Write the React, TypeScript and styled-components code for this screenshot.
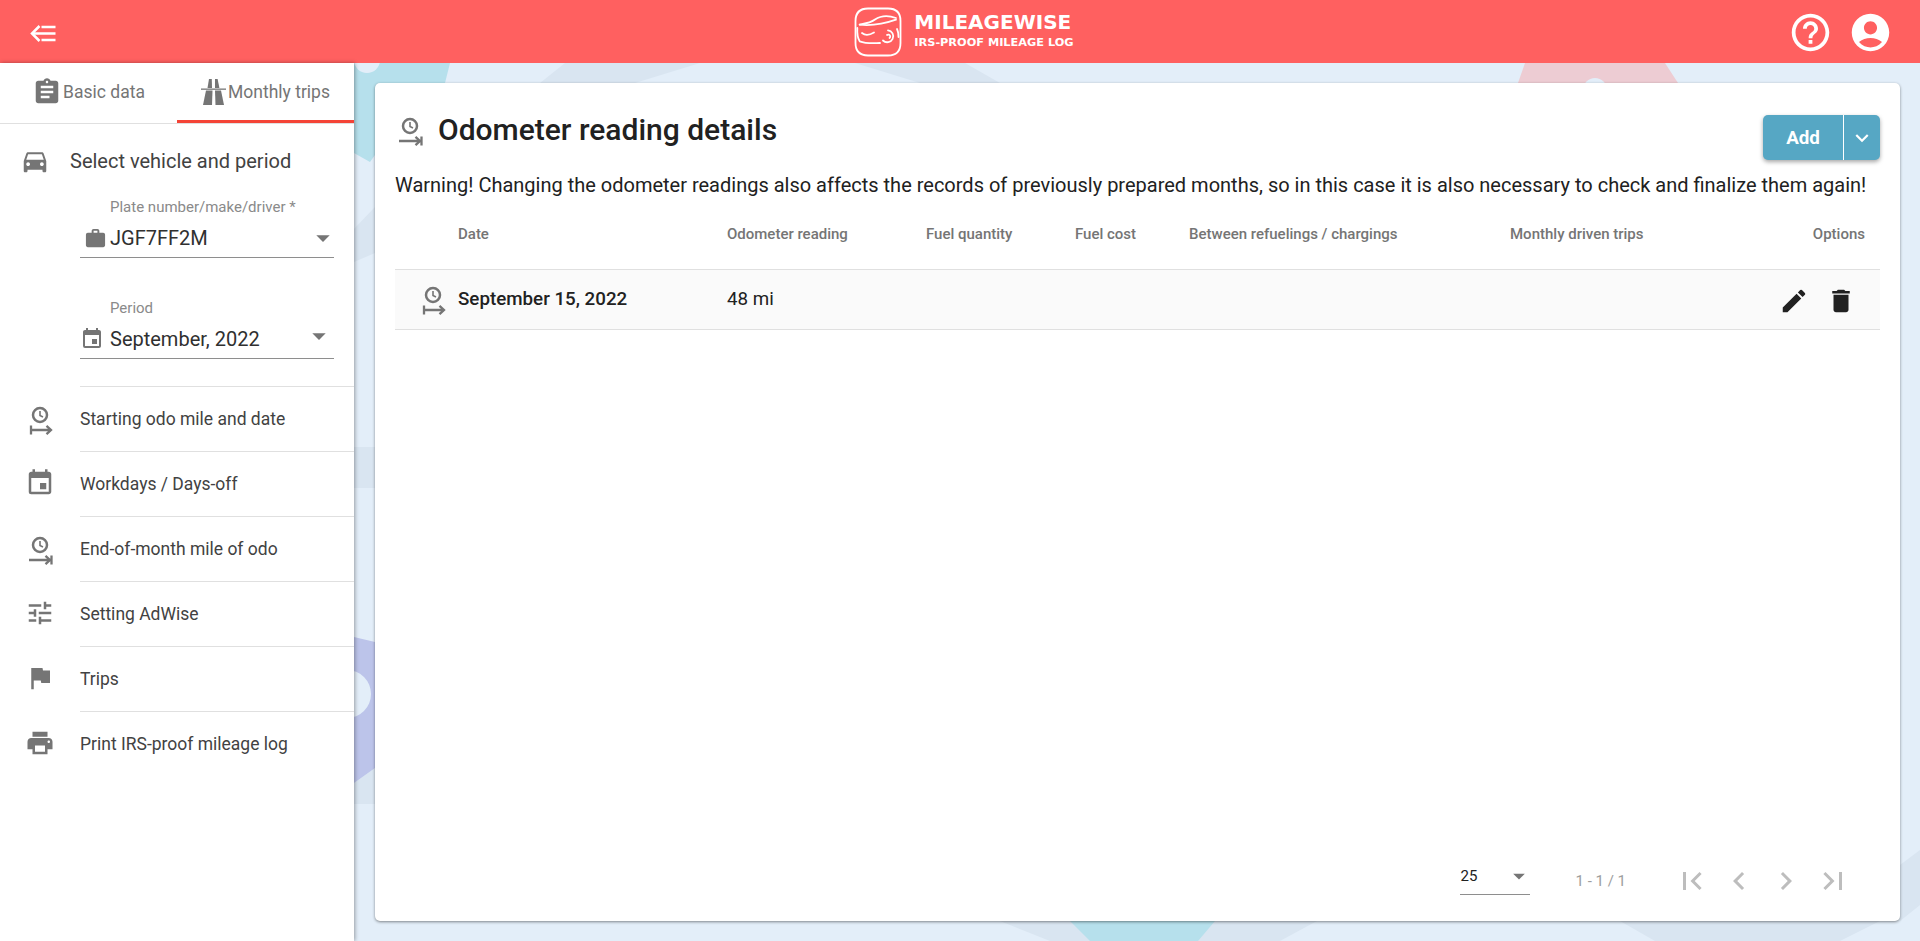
import styled, { createGlobalStyle } from "styled-components";
import {
  MdAccountCircle,
  MdArrowDropDown,
  MdAssignment,
  MdChevronLeft,
  MdChevronRight,
  MdDelete,
  MdDirectionsCar,
  MdEdit,
  MdEvent,
  MdExpandMore,
  MdFirstPage,
  MdFlag,
  MdHelpOutline,
  MdLastPage,
  MdPrint,
  MdTune,
  MdWork,
} from "react-icons/md";

const GlobalStyle = createGlobalStyle`
  html, body {
    margin: 0;
    height: 100%;
    overflow: hidden;
    font-family: Roboto, "Liberation Sans", sans-serif;
    color: #212121;
  }
  #root { height: 100%; }
  * { box-sizing: border-box; }
`;

const Page = styled.div`
  position: relative;
  display: flex;
  flex-direction: column;
  height: 941px;
  background: #e3eef9;
  overflow: hidden;
`;

const Backdrop = styled.svg`
  position: absolute;
  inset: 0;
  width: 100%;
  height: 100%;
`;

const Header = styled.header`
  position: relative;
  flex: 0 0 63px;
  display: grid;
  grid-template-columns: 1fr auto 1fr;
  align-items: center;
  padding: 0 27px 0 30px;
  background: #ff6060;
  color: #fff;
`;

const BackIcon = styled.svg`
  margin-top: 3px;
`;

const Brand = styled.div`
  display: flex;
  align-items: flex-start;
  gap: 12px;
  margin-left: 5px;
`;

const BrandText = styled.div`
  display: flex;
  flex-direction: column;
  margin-top: 3px;
  font-family: "DejaVu Sans", sans-serif;
  font-weight: 700;
  white-space: nowrap;
`;

const BrandName = styled.span`
  font-size: 20px;
  line-height: 24px;
`;

const BrandTag = styled.span`
  font-size: 11.3px;
  line-height: 18px;
`;

const HeaderActions = styled.div`
  display: flex;
  justify-content: flex-end;
  align-items: center;
  gap: 15px;
  margin-top: 2px;
`;

const Body = styled.div`
  position: relative;
  flex: 1;
  display: flex;
  min-height: 0;
`;

const Sidebar = styled.aside`
  flex: 0 0 354px;
  background: #fff;
  box-shadow: 1px 0 4px rgba(0, 0, 0, 0.35);
`;

const Tabs = styled.div`
  display: flex;
  height: 61px;
  border-bottom: 1px solid #e0e0e0;
`;

const Tab = styled.div<{ $active?: boolean }>`
  flex: 1;
  display: flex;
  align-items: center;
  justify-content: center;
  gap: ${(p) => (p.$active ? "2px" : "1px")};
  height: 60px;
  font-size: 17.5px;
  color: #757575;
  border-bottom: 3px solid ${(p) => (p.$active ? "#f44336" : "transparent")};
`;

const VehicleHead = styled.div`
  display: flex;
  align-items: center;
  height: 74px;
  padding-left: 20px;
  gap: 20px;
  font-size: 20px;
  color: #424242;
  svg { color: #757575; }
`;

const Field = styled.div<{ $gap?: number }>`
  margin: ${(p) => p.$gap ?? 0}px 20px 0 80px;
  height: 60px;
  border-bottom: 1px solid #8e8e8e;
`;

const FieldLabel = styled.label`
  display: block;
  padding-left: 30px;
  margin-bottom: 5px;
  font-size: 15px;
  line-height: 18px;
  color: #8a8a8a;
`;

const FieldRow = styled.div`
  display: flex;
  align-items: center;
  height: 36px;
  padding-bottom: 2px;
  font-size: 20px;
  color: #303030;
  svg { color: #757575; flex: none; }
`;

const FieldIcon = styled.span<{ $width: number; $left: number }>`
  display: flex;
  width: ${(p) => p.$width}px;
  margin-left: ${(p) => p.$left}px;
`;

const FieldValue = styled.span`
  flex: 1;
`;

const FieldArrow = styled.span<{ $right: number; $up?: number }>`
  display: flex;
  margin-right: ${(p) => p.$right}px;
  margin-top: ${(p) => -(p.$up ?? 0)}px;
`;

const NavList = styled.nav`
  margin-top: 27px;
`;

const NavItem = styled.div`
  position: relative;
  display: flex;
  align-items: center;
  height: 65px;
  margin-left: 80px;
  border-top: 1px solid #e0e0e0;
  font-size: 17.5px;
  color: #424242;
`;

const NavIcon = styled.span`
  position: absolute;
  left: -55px;
  top: 16px;
  display: flex;
  color: #757575;
`;

const Main = styled.main`
  position: relative;
  flex: 1;
  padding: 20px 20px 20px 21px;
  display: flex;
  min-width: 0;
`;

const Card = styled.section`
  flex: 1;
  display: flex;
  flex-direction: column;
  padding: 0 20px;
  background: #fff;
  border-radius: 5px;
  box-shadow: 0 1px 3px rgba(0, 0, 0, 0.45);
`;

const TitleRow = styled.div`
  display: flex;
  align-items: flex-start;
  justify-content: space-between;
  height: 86px;
  padding-top: 28px;
`;

const Title = styled.h1`
  display: flex;
  align-items: center;
  gap: 13px;
  margin: 0;
  font-size: 30px;
  font-weight: 500;
  line-height: 38px;
  color: #212121;
  svg { color: #757575; }
`;

const AddGroup = styled.div`
  display: flex;
  height: 45px;
  margin-top: 4px;
  color: #fff;
  background: #56a7c4;
  border-radius: 5px;
  box-shadow: 0 2px 4px rgba(0, 0, 0, 0.35);
`;

const AddButton = styled.div`
  width: 81px;
  display: flex;
  align-items: center;
  justify-content: center;
  font-size: 18.75px;
  font-weight: 700;
  border-right: 1px solid #fff;
`;

const AddMenu = styled.div`
  width: 36px;
  display: flex;
  align-items: center;
  justify-content: center;
`;

const Warning = styled.p`
  margin: 0;
  font-size: 20px;
  line-height: 32px;
  color: #212121;
  white-space: nowrap;
`;

const Row = styled.div<{ $head?: boolean }>`
  display: grid;
  grid-template-columns: 63px 269px 199px 149px 114px 321px 1fr 120px;
  align-items: center;
  height: ${(p) => (p.$head ? "69px" : "60px")};
  padding-bottom: ${(p) => (p.$head ? "3px" : "1px")};
  font-size: ${(p) => (p.$head ? "15px" : "18.75px")};
  font-weight: ${(p) => (p.$head ? 500 : 400)};
  color: ${(p) => (p.$head ? "#757575" : "#212121")};
  background: ${(p) => (p.$head ? "transparent" : "#fafafa")};
  border-bottom: 1px solid #e0e0e0;
  white-space: nowrap;
`;

const IconCell = styled.div`
  display: flex;
  justify-content: flex-end;
  padding-right: 10px;
  color: #757575;
`;

const DateCell = styled.div`
  font-weight: 500;
`;

const Options = styled.div<{ $head?: boolean }>`
  display: flex;
  justify-content: flex-end;
  align-items: center;
  gap: 17px;
  margin-top: ${(p) => (p.$head ? "0" : "3px")};
  padding-right: ${(p) => (p.$head ? "15px" : "24px")};
`;

const Spacer = styled.div`
  flex: 1;
`;

const Pager = styled.div`
  display: flex;
  align-items: center;
  justify-content: flex-end;
  height: 80px;
  padding-right: 29px;
`;

const PageSize = styled.div`
  width: 70px;
  height: 36px;
  margin-top: -8px;
  padding-bottom: 2px;
  border-bottom: 1px solid #8e8e8e;
  display: flex;
  align-items: center;
  justify-content: space-between;
  font-size: 15px;
  color: #212121;
  svg { color: #757575; margin-right: -3px; }
`;

const PageInfo = styled.span`
  margin: 0 48px 0 45px;
  font-size: 15px;
  color: #9e9e9e;
`;

const PageButtons = styled.div`
  display: flex;
  gap: 11px;
  color: #bdbdbd;
`;

const OdoIcon = ({ end }: { end?: boolean }) => (
  <svg width="30" height="32" viewBox="0 0 30 32" fill="none" stroke="currentColor">
    <circle cx="15" cy="12" r="7" strokeWidth="2.5" />
    <path d="M15 8V12.5L18 14" strokeWidth="1.6" />
    {end ? (
      <path d="M4 27H25M20.5 22.8L25 27L20.5 31.2M26.5 22.5V31.5" strokeWidth="2.3" />
    ) : (
      <path d="M6 22.5V31.5M6 27H26M21.5 22.8L26 27L21.5 31.2" strokeWidth="2.3" />
    )}
  </svg>
);

const RoadIcon = () => (
  <svg width="25" height="26" viewBox="0 0 25 26" fill="currentColor">
    <path d="M0 9.5H25V10.8H0Z" />
    <path d="M5 11.5H11.5L11 26H2Z" />
    <path d="M14 11.5H20L23 26H14.5Z" />
    <path d="M8 0H10.8L11 9H6.5Z" />
    <path d="M14 0H16.6L18.4 9H14Z" />
  </svg>
);

const Logo = () => (
  <svg width="48" height="50" viewBox="0 0 48 50" fill="none" stroke="#fff" strokeWidth="1.8" strokeLinecap="round">
    <path d="M14 1.5H34C42 1.5 46.5 6 46.5 14V36C46.5 44 42 48.5 34 48.5H14C6 48.5 1.5 44 1.5 36V14C1.5 6 6 1.5 14 1.5Z" />
    <path d="M5.7 17.7C12 16.5 18 15 21 12.5C27 8.5 35 8.5 42 11" />
    <path d="M5.7 17.7C14 18.5 27 18 42 12.7" />
    <path d="M3.3 21C3 27 3.5 31 5.7 34.3C10 36 18 36.5 26 36" />
    <path d="M8 26C11 28.5 15 28.5 20 25.5" />
    <path d="M29 33.5A6 6 0 1 0 34 23.3" />
    <path d="M35.5 31A1.8 1.8 0 1 0 33 28" />
    <path d="M43 22C44 24 44.5 27 44.5 30" />
  </svg>
);

const navItems = [
  { label: "Starting odo mile and date", icon: <OdoIcon /> },
  { label: "Workdays / Days-off", icon: <MdEvent size={30} /> },
  { label: "End-of-month mile of odo", icon: <OdoIcon end /> },
  { label: "Setting AdWise", icon: <MdTune size={30} /> },
  { label: "Trips", icon: <MdFlag size={30} /> },
  { label: "Print IRS-proof mileage log", icon: <MdPrint size={30} /> },
];

const columns = [
  "Date",
  "Odometer reading",
  "Fuel quantity",
  "Fuel cost",
  "Between refuelings / chargings",
  "Monthly driven trips",
];

export default function App() {
  return (
    <Page>
      <GlobalStyle />
      <Backdrop viewBox="0 0 1920 941" aria-hidden="true">
        <g fill="#d9e5f1">
          <polygon points="565,63 965,63 1000,83 540,83" />
          <polygon points="1000,921 1317,921 1280,941 1050,941" />
          <polygon points="1620,921 1880,921 1840,941 1655,941" />
          <polygon points="354,229 375,207 375,253 354,262" />
          <rect x="354" y="447" width="21" height="41" />
          <polygon points="354,783 375,768 375,804 354,804" />
          <polygon points="1900,865 1920,850 1920,905 1900,921" />
        </g>
        <g fill="#e3eef9">
          <polygon points="700,63 855,63 920,83 635,83" />
        </g>
        <polygon fill="#b6e0ec" points="354,63 450,63 445,83 375,155 370,162 354,153" />
        <polygon fill="#b6e0ec" points="1070,921 1215,921 1198,941 1090,941" />
        <polygon fill="#edccd3" points="1525,63 1665,63 1678,83 1518,83" />
        <polygon fill="#bcc4ea" points="354,637 375,642 375,768 354,783" />
        <circle cx="367" cy="60" r="13" fill="#e3eef9" />
        <circle cx="1595" cy="90" r="12" fill="#e3eef9" />
        <circle cx="347" cy="694" r="24" fill="#e3eef9" />
      </Backdrop>

      <Header>
        <BackIcon width="26" height="17" viewBox="0 0 26 17" fill="none" stroke="#fff" strokeWidth="2.5">
          <path d="M9.5 1L2 8.5L9.5 16" />
          <path d="M2 8.5H25.5M11.5 2H25.5M11.5 15H25.5" />
        </BackIcon>
        <Brand>
          <Logo />
          <BrandText>
            <BrandName>MILEAGEWISE</BrandName>
            <BrandTag>IRS-PROOF MILEAGE LOG</BrandTag>
          </BrandText>
        </Brand>
        <HeaderActions>
          <MdHelpOutline size={45} />
          <MdAccountCircle size={45} />
        </HeaderActions>
      </Header>

      <Body>
        <Sidebar>
          <Tabs>
            <Tab>
              <MdAssignment size={30} />
              Basic data
            </Tab>
            <Tab $active>
              <RoadIcon />
              Monthly trips
            </Tab>
          </Tabs>
          <VehicleHead>
            <MdDirectionsCar size={30} />
            Select vehicle and period
          </VehicleHead>
          <Field>
            <FieldLabel>Plate number/make/driver *</FieldLabel>
            <FieldRow>
              <FieldIcon $width={30} $left={0}>
                <MdWork size={23} style={{ marginLeft: 4 }} />
              </FieldIcon>
              <FieldValue>JGF7FF2M</FieldValue>
              <FieldArrow $right={-5}>
                <MdArrowDropDown size={32} />
              </FieldArrow>
            </FieldRow>
          </Field>
          <Field $gap={41}>
            <FieldLabel>Period</FieldLabel>
            <FieldRow>
              <FieldIcon $width={30} $left={0}>
                <MdEvent size={24} />
              </FieldIcon>
              <FieldValue>September, 2022</FieldValue>
              <FieldArrow $right={-1} $up={6}>
                <MdArrowDropDown size={32} />
              </FieldArrow>
            </FieldRow>
          </Field>
          <NavList>
            {navItems.map((item) => (
              <NavItem key={item.label}>
                <NavIcon>{item.icon}</NavIcon>
                {item.label}
              </NavItem>
            ))}
          </NavList>
        </Sidebar>

        <Main>
          <Card>
            <TitleRow>
              <Title>
                <OdoIcon end />
                Odometer reading details
              </Title>
              <AddGroup>
                <AddButton>Add</AddButton>
                <AddMenu>
                  <MdExpandMore size={26} />
                </AddMenu>
              </AddGroup>
            </TitleRow>
            <Warning>
              Warning! Changing the odometer readings also affects the records of previously prepared months, so in
              this case it is also necessary to check and finalize them again!
            </Warning>
            <Row $head>
              <div />
              {columns.map((c) => (
                <div key={c}>{c}</div>
              ))}
              <Options $head>Options</Options>
            </Row>
            <Row>
              <IconCell>
                <OdoIcon />
              </IconCell>
              <DateCell>September 15, 2022</DateCell>
              <div>48 mi</div>
              <div />
              <div />
              <div />
              <div />
              <Options>
                <MdEdit size={30} />
                <MdDelete size={30} />
              </Options>
            </Row>
            <Spacer />
            <Pager>
              <PageSize>
                25
                <MdArrowDropDown size={28} />
              </PageSize>
              <PageInfo>1 - 1 / 1</PageInfo>
              <PageButtons>
                <MdFirstPage size={36} />
                <MdChevronLeft size={36} />
                <MdChevronRight size={36} />
                <MdLastPage size={36} />
              </PageButtons>
            </Pager>
          </Card>
        </Main>
      </Body>
    </Page>
  );
}
